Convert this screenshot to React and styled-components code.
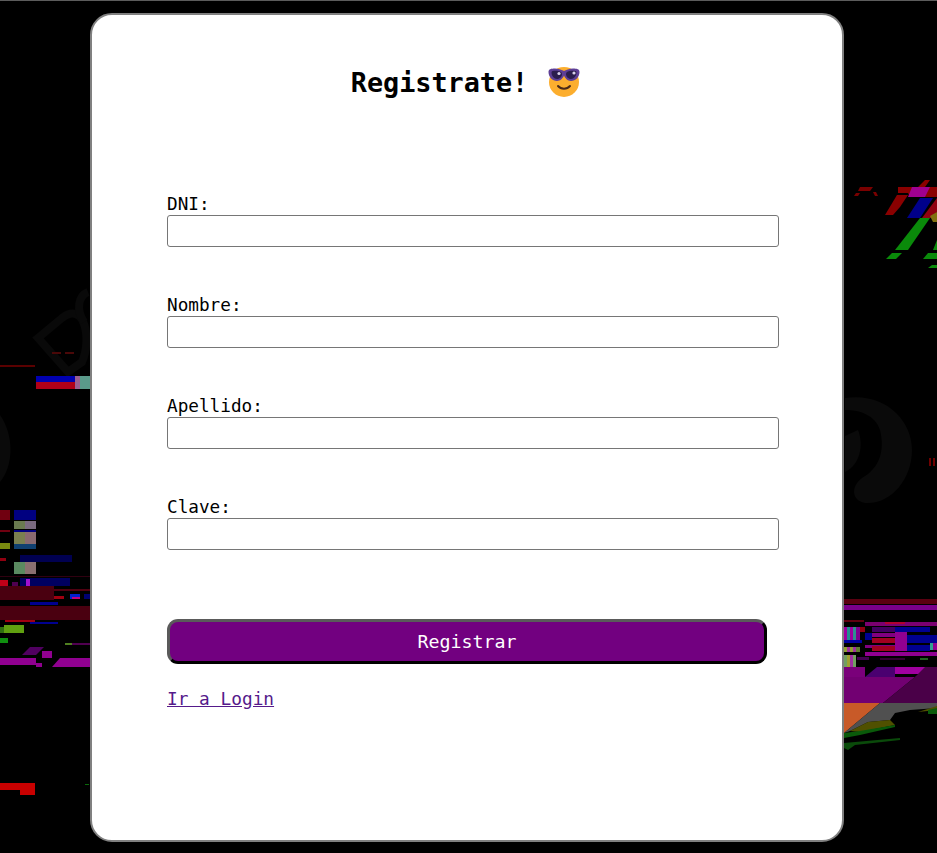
import React from 'react';
import styled, { createGlobalStyle } from 'styled-components';

const GlobalStyle = createGlobalStyle`
    html, body {
        margin: 0;
        padding: 0;
        background: #000;
    }
    body {
        border-top: 1px solid #5c5c5c;
        height: 852px;
        overflow: hidden;
        font-family: "DejaVu Sans Mono", "Liberation Mono", monospace;
    }
`

const Backdrop = styled.svg`
    position: absolute;
    top: 1px;
    left: 0;
    width: 937px;
    height: 852px;
    filter: blur(0.5px);
`

const Page = styled.main`
    position: relative;
    display: flex;
    padding: 12px 0 0 90px;
`

const Card = styled.section`
    box-sizing: border-box;
    display: flex;
    flex-direction: column;
    width: 754px;
    height: 829px;
    padding: 0 63px 0 75px;
    background: #fff;
    border: 2px solid #808080;
    border-radius: 22px;
`

const Title = styled.h1`
    display: flex;
    justify-content: center;
    align-items: center;
    gap: 20px;
    margin: 51px 15px 0 0;
    height: 32px;
    font-size: 26.8px;
    font-weight: bold;
    color: #000;
`

const Form = styled.form`
    display: flex;
    flex-direction: column;
    gap: 49px;
    margin-top: 97px;
`

const Field = styled.div`
    display: flex;
    flex-direction: column;
`

const Label = styled.label`
    height: 20px;
    line-height: 18px;
    font-size: 17.7px;
    color: #000;
`

const Input = styled.input`
    box-sizing: border-box;
    width: 612px;
    height: 32px;
    padding: 1px 2px;
    background: #fff;
    border: 1px solid #767676;
    border-radius: 3px;
`

const Submit = styled.button`
    box-sizing: border-box;
    width: 600px;
    height: 45px;
    margin-top: 20px;
    background: #720080;
    border-style: solid;
    border-width: 3px;
    border-color: #5a5a5a #000 #000 #5a5a5a;
    border-radius: 11px;
    color: #fff;
    font-family: inherit;
    font-size: 18.3px;
    font-weight: 500;
`

const LoginLink = styled.a`
    align-self: flex-start;
    margin-top: 24px;
    line-height: 22px;
    font-size: 17.8px;
    color: #551a8b;
    text-decoration: underline;
`

const blocks = [
    [0, 365, 35, 2, '#5a0000'], [52, 352, 9, 2, '#4a0808'], [65, 352, 9, 2, '#4a0808'],
    [36, 376, 39, 6, '#0000b0'], [36, 382, 39, 7, '#b00018'], [75, 376, 5, 13, '#9a6090'], [80, 376, 10, 13, '#5a9a8a'],
    [0, 510, 10, 10, '#700010'], [14, 510, 22, 10, '#000080'], [14, 521, 11, 8, '#6a7a50'], [25, 521, 11, 8, '#7a6a80'],
    [0, 530, 10, 2, '#700010'], [14, 530, 22, 2, '#000080'], [14, 532, 11, 12, '#7a8050'], [25, 532, 11, 12, '#8a6a70'],
    [14, 544, 22, 5, '#104070'], [0, 543, 10, 6, '#7a8a10'], [0, 558, 6, 3, '#900010'], [20, 555, 52, 7, '#000050'],
    [14, 562, 11, 12, '#5a8a60'], [25, 562, 11, 12, '#8a7070'], [0, 576, 90, 1, '#300010'],
    [0, 580, 8, 8, '#c00018'], [12, 582, 6, 6, '#500050'], [20, 578, 50, 8, '#000060'], [26, 579, 4, 7, '#a010d0'],
    [0, 586, 54, 14, '#4a0010'], [54, 589, 36, 2, '#500010'], [54, 596, 10, 3, '#a00010'],
    [70, 594, 10, 5, '#0020d0'], [72, 597, 8, 2, '#c00080'], [84, 594, 6, 5, '#000070'],
    [30, 602, 28, 3, '#000090'], [0, 606, 90, 14, '#4a0010'], [5, 620, 30, 2, '#a00010'], [30, 622, 28, 2, '#000090'],
    [0, 627, 4, 6, '#307010'], [4, 625, 20, 8, '#60a010'], [0, 638, 8, 5, '#109010'],
    [65, 643, 7, 2, '#508020'], [72, 643, 18, 2, '#500050'], [42, 651, 10, 7, '#900090'], [36, 663, 6, 4, '#900090'],
    [0, 783, 35, 7, '#c80000'], [20, 790, 15, 5, '#c80000'], [85, 784, 4, 1, '#0a6a0a'],
    [929, 458, 2, 8, '#700000'], [933, 458, 2, 8, '#700000'],
    [844, 599, 93, 5, '#5a0010'], [844, 605, 93, 5, '#7a008a'], [844, 620, 20, 2, '#600010'],
    [865, 622, 72, 4, '#7a0070'], [885, 622, 20, 2, '#b00030'], [844, 627, 3, 13, '#a000a0'], [847, 627, 3, 13, '#209090'],
    [850, 627, 3, 13, '#a000a0'], [853, 627, 3, 13, '#309090'], [856, 627, 4, 13, '#800090'], [860, 627, 5, 5, '#900010'],
    [872, 627, 23, 5, '#400060'], [895, 627, 35, 5, '#000090'], [865, 633, 7, 7, '#000090'], [872, 633, 23, 4, '#800080'],
    [872, 638, 23, 5, '#a00020'], [895, 632, 12, 13, '#900090'], [907, 635, 30, 8, '#000090'], [844, 640, 18, 3, '#0000a0'],
    [930, 643, 3, 7, '#30a090'], [933, 643, 4, 7, '#900090'], [865, 645, 30, 3, '#800080'], [872, 646, 23, 5, '#a00020'],
    [895, 645, 12, 6, '#900090'], [907, 645, 23, 6, '#000090'], [844, 647, 3, 5, '#90a030'], [847, 647, 3, 5, '#a030a0'],
    [850, 647, 3, 5, '#90a030'], [853, 647, 3, 5, '#a030a0'], [856, 647, 4, 5, '#608030'], [865, 652, 72, 4, '#900090'],
    [844, 655, 3, 12, '#70a060'], [847, 655, 3, 12, '#a0a030'], [850, 655, 3, 12, '#a030a0'], [853, 655, 3, 12, '#70a060'],
    [857, 657, 12, 3, '#400050'], [880, 658, 25, 2, '#300030'], [920, 658, 8, 2, '#206020'],
    [895, 667, 35, 7, '#a000a0'], [844, 667, 21, 10, '#7a007a'],
]

const shapes = [
    ['860,187 873,187 870,191 858,191', '#7a0000'], ['856,193 860,193 858,196 854,196', '#7a0000'], ['873,192 876,192 878,196 875,196', '#7a0000'],
    ['885,215 897,195 908,195 900,207 893,215', '#8a0000'],
    ['898,187 918,187 925,180 930,180 925,187 937,187 937,197 910,197 908,193 898,193', '#8a0000'],
    ['912,187 930,187 925,197 908,197', '#a00090'],
    ['907,218 920,198 933,198 920,218', '#00008a'],
    ['922,218 937,198 937,212 932,218', '#900010'],
    ['930,216 937,212 937,222 933,222', '#807010'],
    ['895,250 920,218 930,218 908,250', '#0a8a0a'],
    ['886,259 892,253 902,253 896,259', '#0a8a0a'], ['923,259 928,253 937,253 937,259', '#0a8a0a'],
    ['928,268 932,265 937,265 937,268', '#0a8a0a'], ['933,250 937,240 937,250', '#0a8a0a'],
    ['22,655 30,647 44,647 36,655', '#500060'],
    ['0,658 36,658 36,665 0,665', '#900090'],
    ['52,667 60,658 90,658 90,667', '#900090'],
    ['844,677 915,677 883,703 844,703', '#720072'],
    ['865,677 877,667 895,667 895,677', '#4a0070'],
    ['883,703 915,677 937,668 937,703', '#4a0048'],
    ['915,677 925,667 937,667 937,677', '#4a0048'],
    ['844,703 880,703 844,733', '#c85a28'],
    ['880,703 937,703 937,708 910,710 895,713 890,720 868,722 850,731 844,733', '#505050'],
    ['868,722 890,720 895,725 860,732 850,731', '#505000'],
    ['918,712 937,706 937,710', '#505000'],
    ['928,710 937,708 937,714 928,714', '#0a5a0a'],
    ['844,733 860,731 895,725 895,727 860,735 844,738', '#0a5a0a'],
    ['844,743 900,738 900,740 855,745 848,750 844,748', '#0a4a0a'],
]

const Glitch = () => (
    <Backdrop viewBox="0 1 937 852" aria-hidden="true">
        <g fill="none" stroke="#090909" strokeWidth="8">
            <path d="M38 338 L62 318 C85 300 92 340 82 362 L68 372 L38 338 Z" />
            <path d="M88 292 C78 296 76 310 84 322" />
        </g>
        <path d="M0 415 C14 435 14 465 0 482 Z" fill="#0a0a0a" />
        <path d="M845 398 C885 392 912 420 912 450 C912 480 890 505 865 503 C850 500 852 485 862 478 C880 468 885 450 880 430 C875 415 860 410 845 410 Z" fill="#0a0a0a" />
        <path d="M845 436 L858 430 C864 445 860 465 845 472 Z" fill="#0a0a0a" />
        {blocks.map(([x, y, w, h, fill], i) => (
            <rect key={i} x={x} y={y} width={w} height={h} fill={fill} />
        ))}
        {shapes.map(([points, fill], i) => (
            <polygon key={i} points={points} fill={fill} />
        ))}
    </Backdrop>
)

const CoolFace = () => (
    <svg width="32" height="32" viewBox="0 0 32 32" aria-hidden="true">
        <circle cx="16" cy="16" r="15" fill="#fcae2e" />
        <path d="M0.5 6 C0.5 3 3 2.5 7 2.5 C11 2.5 14 4 16 5 C18 4 21 2.5 25 2.5 C29 2.5 31.5 3 31.5 6 C31.5 11 27.5 15 23 15 C19.5 15 17 12 16 9.5 C15 12 12.5 15 9 15 C4.5 15 0.5 11 0.5 6 Z" fill="#5e3f96" />
        <path d="M3.5 6.5 C3.5 5 5 4.8 8 4.8 C11 4.8 14 6 14 8 C14 10.5 12 13 9 13 C6 13 3.5 10 3.5 6.5 Z" fill="#2b1d4d" />
        <path d="M18 8 C18 6 21 4.8 24 4.8 C27 4.8 28.5 5 28.5 6.5 C28.5 10 26 13 23 13 C20 13 18 10.5 18 8 Z" fill="#2b1d4d" />
        <circle cx="11" cy="7.5" r="1.6" fill="#d8d0ea" />
        <circle cx="26" cy="7" r="1.6" fill="#d8d0ea" />
        <path d="M10 20 C13 23.5 19 23.5 22 20" fill="none" stroke="#4a2a18" strokeWidth="2" strokeLinecap="round" />
    </svg>
)

const fields = ['DNI', 'Nombre', 'Apellido', 'Clave']

const App = () => (
    <>
        <GlobalStyle />
        <Glitch />
        <Page>
            <Card>
                <Title>Registrate! <CoolFace /></Title>
                <Form onSubmit={(e) => e.preventDefault()}>
                    {fields.map((name) => (
                        <Field key={name}>
                            <Label htmlFor={name}>{name}:</Label>
                            <Input id={name} type={name === 'Clave' ? 'password' : 'text'} />
                        </Field>
                    ))}
                    <Submit type="submit">Registrar</Submit>
                </Form>
                <LoginLink href="#login">Ir a Login</LoginLink>
            </Card>
        </Page>
    </>
)

export default App;
